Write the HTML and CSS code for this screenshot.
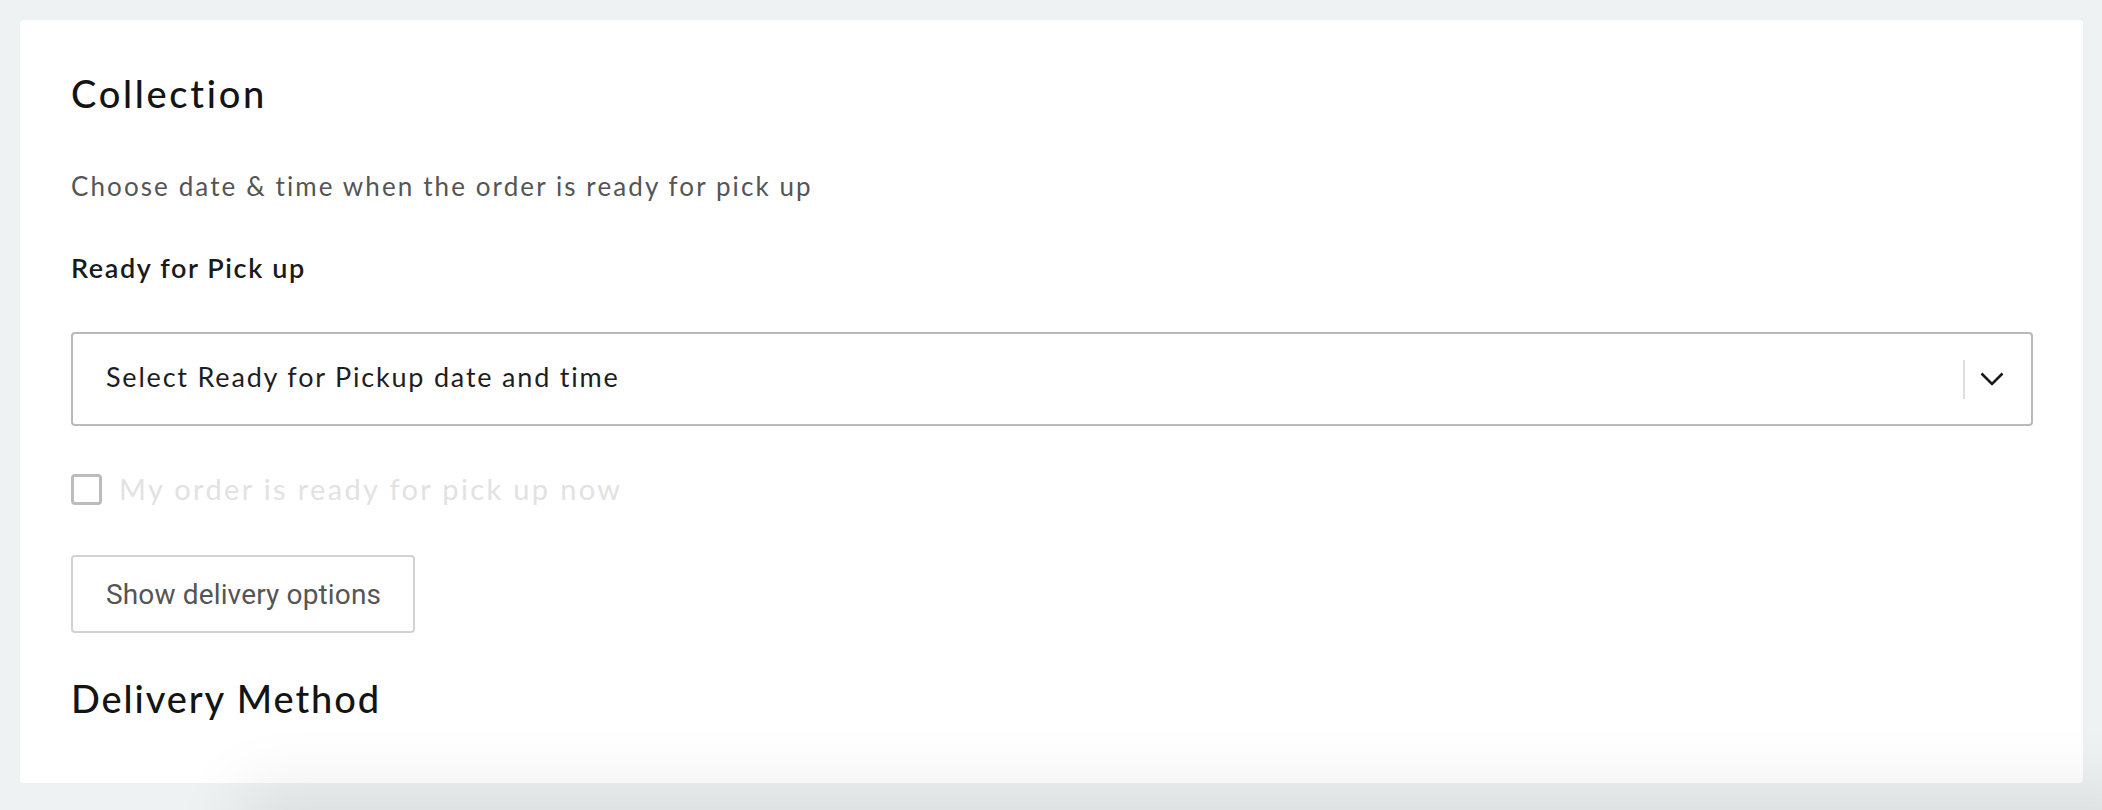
FILE: index.html
```html
<!DOCTYPE html>
<html lang="en">

<head>
    <meta charset="UTF-8">
    <meta name="viewport" content="width=device-width, initial-scale=1.0">
    <title>Collection</title>
    <link rel="stylesheet" href="styles.css">
</head>

<body>
    <div class="card">
        <h2 class="title">Collection</h2>
        <p class="hint">Choose date &amp; time when the order is ready for pick up</p>
        <label class="label" for="pickup">Ready for Pick up</label>

        <div class="select" id="pickup">
            <span class="select-text">Select Ready for Pickup date and time</span>
            <span class="select-sep"></span>
            <svg class="chevron" viewBox="0 0 24 14" width="24" height="14">
                <polyline points="1.5,1.5 12,12 22.5,1.5" fill="none" stroke="#1a1a1a" stroke-width="2.6" stroke-linejoin="miter"></polyline>
            </svg>
        </div>

        <div class="check-row">
            <span class="checkbox"></span>
            <span class="check-text">My order is ready for pick up now</span>
        </div>

        <div>
            <button class="btn">Show delivery options</button>
        </div>

        <h2 class="title title-delivery">Delivery Method</h2>
    </div>
    <!-- shadow from the bar below the fold -->
    <div class="bottom-bar"></div>
</body>

</html>
```

FILE: styles.css
```css
* {
    margin: 0;
    padding: 0;
    box-sizing: border-box;
}

html,
body {
    height: 100%;
    overflow: hidden;
}

body {
    background: #eef2f3;
    padding: 20px 19px 0 20px;
    font-family: 'Lato', sans-serif;
    color: #1a1a1a;
}

.card {
    background: #ffffff;
    border-radius: 4px;
    height: 763px;
    padding: 50px 50px 0 51px;
}

.title {
    font-size: 38px;
    line-height: 46px;
    font-weight: 500;
    color: #141414;
    letter-spacing: 2.7px;
}

.hint {
    margin-top: 54px;
    font-size: 26px;
    line-height: 32px;
    color: #555;
    letter-spacing: 2.1px;
}

.label {
    display: block;
    margin-top: 50px;
    font-size: 27px;
    line-height: 32px;
    font-weight: 600;
    color: #1a1a1a;
    letter-spacing: 1.6px;
}

.select {
    margin-top: 48px;
    height: 94px;
    border: 2px solid #b9b9b9;
    border-radius: 4px;
    display: flex;
    align-items: center;
    padding: 0 27px 0 33px;
}

.select-text {
    flex: 1;
    font-size: 27px;
    color: #1e1e1e;
    letter-spacing: 1.8px;
    padding-bottom: 6px;
}

.select-sep {
    width: 2px;
    height: 39px;
    background: #dedede;
    margin-right: 15px;
}

.chevron {
    display: block;
}

.check-row {
    margin-top: 48px;
    display: flex;
    align-items: center;
    gap: 17px;
    height: 31px;
}

.checkbox {
    width: 31px;
    height: 31px;
    border: 3px solid #bcbcbc;
    border-radius: 4px;
}

.check-text {
    font-size: 29px;
    color: #e2e2e2;
    letter-spacing: 2.35px;
    padding-bottom: 2px;
}

.btn {
    margin-top: 50px;
    width: 344px;
    height: 78px;
    padding-left: 33px;
    text-align: left;
    background: #fff;
    border: 2px solid #d2d2d2;
    border-radius: 4px;
    font-family: 'Roboto', sans-serif;
    font-size: 28px;
    letter-spacing: 0.15px;
    color: #555;
}

.title-delivery {
    margin-top: 42px;
    letter-spacing: 1.9px;
}

.bottom-bar {
    position: fixed;
    left: 260px;
    right: -40px;
    top: 100%;
    height: 40px;
    box-shadow: 0 0 70px 20px rgba(0, 0, 0, 0.09);
}
```
